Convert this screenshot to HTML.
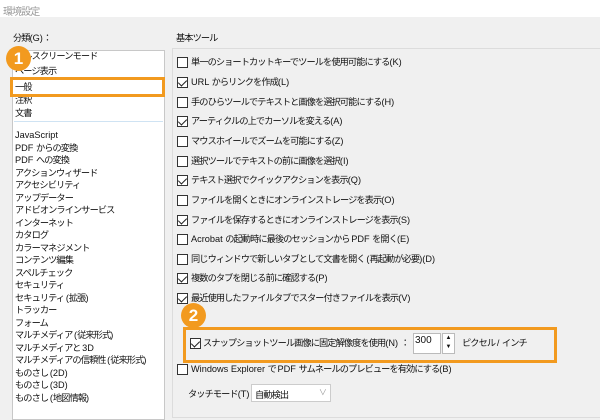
<!DOCTYPE html>
<html><head><meta charset="utf-8"><style>
*{margin:0;padding:0;box-sizing:border-box}
body{width:600px;height:408px;overflow:hidden;background:#f0f0f0;font-family:"Liberation Sans","Noto Sans CJK JP",sans-serif;font-size:9.2px;letter-spacing:-0.9px;color:#111;position:relative}
.t{position:absolute;white-space:nowrap;line-height:12px}
.l{letter-spacing:0}
#title{position:absolute;left:0;top:0;width:600px;height:17px;background:#fff;color:#999;font-size:10px;padding:3px 0 0 3px}
#list{position:absolute;left:12px;top:50px;width:153px;height:370px;background:#fff;border:1px solid #c8c8c8}
#group{position:absolute;left:172px;top:48px;width:440px;height:370px;border:1px solid #dcdcdc}
.cb{position:absolute;width:11px;height:11px;border:1px solid #333;background:#fff}
.cb.c::after{content:"";position:absolute;left:2px;top:0px;width:4px;height:7px;border:solid #222;border-width:0 1.3px 1.3px 0;transform:rotate(45deg)}
.circ{position:absolute;width:25px;height:25px;border-radius:50%;background:#f29a1f;color:#fff;font-weight:bold;font-size:17px;letter-spacing:0;text-align:center;line-height:25px}
.box{position:absolute;border:3px solid #f29a1f}
</style></head><body>
<div id="title">環境設定</div>
<div class="t" style="left:13px;top:32px">分類<span class="l">(G)</span>：</div>
<div class="t" style="left:176px;top:32px">基本ツール</div>
<div id="list"></div>
<div id="group"></div>
<div class="t" style="left:15px;top:50px">フルスクリーンモード</div>
<div class="t" style="left:15px;top:65px">ページ表示</div>
<div class="t" style="left:15px;top:81px">一般</div>
<div class="t" style="left:15px;top:94px">注釈</div>
<div class="t" style="left:15px;top:107px">文書</div>
<div style="position:absolute;left:14px;top:121px;width:149px;height:1px;background:#cfe3f3"></div>
<div class="t" style="left:15px;top:129px;line-height:12.5px"><span class="l">JavaScript</span><br><span class="l">PDF </span>からの変換<br><span class="l">PDF </span>への変換<br>アクションウィザード<br>アクセシビリティ<br>アップデーター<br>アドビオンラインサービス<br>インターネット<br>カタログ<br>カラーマネジメント<br>コンテンツ編集<br>スペルチェック<br>セキュリティ<br>セキュリティ <span class="l">(</span>拡張<span class="l">)</span><br>トラッカー<br>フォーム<br>マルチメディア <span class="l">(</span>従来形式<span class="l">)</span><br>マルチメディアと <span class="l">3D</span><br>マルチメディアの信頼性 <span class="l">(</span>従来形式<span class="l">)</span><br>ものさし <span class="l">(2D)</span><br>ものさし <span class="l">(3D)</span><br>ものさし <span class="l">(</span>地図情報<span class="l">)</span></div>
<div class="box" style="left:10px;top:77px;width:155px;height:20px"></div>
<div class="circ" style="left:6px;top:46px">1</div>

<div class="cb" style="left:177px;top:57px"></div><div class="t" style="left:191px;top:56px">単一のショートカットキーでツールを使用可能にする<span class="l">(K)</span></div>
<div class="cb c" style="left:177px;top:77px"></div><div class="t" style="left:191px;top:76px"><span class="l">URL </span>からリンクを作成<span class="l">(L)</span></div>
<div class="cb" style="left:177px;top:97px"></div><div class="t" style="left:191px;top:96px">手のひらツールでテキストと画像を選択可能にする<span class="l">(H)</span></div>
<div class="cb c" style="left:177px;top:116px"></div><div class="t" style="left:191px;top:115px">アーティクルの上でカーソルを変える<span class="l">(A)</span></div>
<div class="cb" style="left:177px;top:136px"></div><div class="t" style="left:191px;top:135px">マウスホイールでズームを可能にする<span class="l">(Z)</span></div>
<div class="cb" style="left:177px;top:156px"></div><div class="t" style="left:191px;top:155px">選択ツールでテキストの前に画像を選択<span class="l">(I)</span></div>
<div class="cb c" style="left:177px;top:175px"></div><div class="t" style="left:191px;top:174px">テキスト選択でクイックアクションを表示<span class="l">(Q)</span></div>
<div class="cb" style="left:177px;top:195px"></div><div class="t" style="left:191px;top:194px">ファイルを開くときにオンラインストレージを表示<span class="l">(O)</span></div>
<div class="cb c" style="left:177px;top:215px"></div><div class="t" style="left:191px;top:214px">ファイルを保存するときにオンラインストレージを表示<span class="l">(S)</span></div>
<div class="cb" style="left:177px;top:234px"></div><div class="t" style="left:191px;top:233px"><span class="l">Acrobat </span>の起動時に最後のセッションから <span class="l">PDF </span>を開く<span class="l">(E)</span></div>
<div class="cb" style="left:177px;top:254px"></div><div class="t" style="left:191px;top:253px">同じウィンドウで新しいタブとして文書を開く <span class="l">(</span>再起動が必要<span class="l">)(D)</span></div>
<div class="cb c" style="left:177px;top:273px"></div><div class="t" style="left:191px;top:272px">複数のタブを閉じる前に確認する<span class="l">(P)</span></div>
<div class="cb c" style="left:177px;top:293px"></div><div class="t" style="left:191px;top:292px">最近使用したファイルタブでスター付きファイルを表示<span class="l">(V)</span></div>

<div class="box" style="left:183px;top:327px;width:374px;height:36px"></div>
<div class="circ" style="left:181px;top:303px">2</div>
<div class="cb c" style="left:190px;top:338px"></div><div class="t" style="left:203px;top:337px">スナップショットツール画像に固定解像度を使用<span class="l">(N) </span>：</div>
<div style="position:absolute;left:413px;top:333px;width:28px;height:21px;background:#fff;border:1px solid #bbb;font-size:10px;letter-spacing:0;padding:1px 0 0 1px">300</div>
<div style="position:absolute;left:442px;top:333px;width:13px;height:21px;background:#fff;border:1px solid #bbb;font-size:6px;letter-spacing:0;text-align:center;line-height:9px">▲<br>▼</div>
<div class="t" style="left:462px;top:337px">ピクセル <span class="l">/ </span>インチ</div>
<div class="cb" style="left:177px;top:364px"></div><div class="t" style="left:191px;top:363px"><span class="l">Windows Explorer </span>で <span class="l">PDF </span>サムネールのプレビューを有効にする<span class="l">(B)</span></div>
<div class="t" style="left:188px;top:388px">タッチモード<span class="l">(T)</span>：</div>
<div style="position:absolute;left:251px;top:384px;width:80px;height:18px;background:#fff;border:1px solid #ccc;padding:2px 0 0 3px">自動検出<span style="position:absolute;right:4px;top:2px;color:#999;font-size:8px">∨</span></div>
</body></html>
